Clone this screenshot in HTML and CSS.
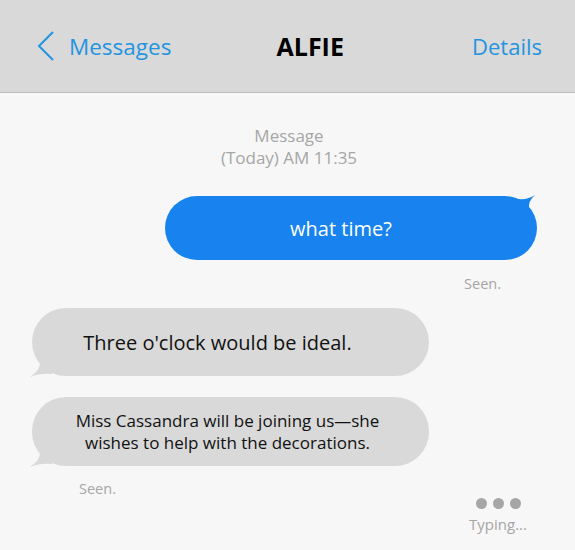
FILE: index.html
```html
<!DOCTYPE html>
<html lang="en">
  <head>
    <meta charset="UTF-8" />
    <meta name="viewport" content="width=device-width, initial-scale=1.0" />
    <title>Alfie</title>
    <link rel="stylesheet" href="styles.css">
  </head>
  <body>
    <div class="top-bar">
      <a class="back-link">
        <svg class="chevron" width="18" height="30" viewBox="0 0 18 30">
          <path d="M16 1 L2 15 L16 29" fill="none" stroke="#2394e0" stroke-width="2" />
        </svg>
        Messages
      </a>
      <h1 class="contact-name">ALFIE</h1>
      <a class="details-link">Details</a>
    </div>

    <div class="chat">
      <p class="stamp">Message<br />(Today) AM 11:35</p>

      <div class="bubble bubble-out">
        what time?
        <svg class="tail tail-out" width="20" height="14" viewBox="0 0 20 14">
          <path d="M0 4 Q10 5 17 0 Q10 6 11 14 L0 14 Z" fill="#1883ef" />
        </svg>
      </div>
      <p class="seen seen-out">Seen.</p>

      <div class="bubble bubble-in">
        Three o'clock would be ideal.
        <svg class="tail tail-in" width="22" height="16" viewBox="0 0 22 16">
          <path d="M10 0 Q11 9 0 16 Q10 12 22 13 L22 0 Z" fill="#d9d9d9" />
        </svg>
      </div>

      <div class="bubble bubble-in small">
        Miss Cassandra will be joining us—she<br />wishes to help with the decorations.
        <svg class="tail tail-in" width="22" height="16" viewBox="0 0 22 16">
          <path d="M10 0 Q11 9 0 16 Q10 12 22 13 L22 0 Z" fill="#d9d9d9" />
        </svg>
      </div>
      <p class="seen seen-in">Seen.</p>

      <div class="typing">
        <div class="dots"><span></span><span></span><span></span></div>
        <p>Typing...</p>
      </div>
    </div>
  </body>
</html>
```

FILE: styles.css
```css
body {
  margin: 0;
  font-family: "Open Sans", sans-serif;
  background: #f7f7f7;
  min-height: 100vh;
}

.top-bar {
  display: flex;
  align-items: center;
  justify-content: space-between;
  height: 92px;
  padding: 0 33px 0 37px;
  background: #d9d9d9;
  border-bottom: 1px solid #bdbdbd;
}

.back-link,
.details-link {
  display: flex;
  align-items: center;
  gap: 14px;
  color: #2394e0;
  font-size: 22.5px;
}

.details-link {
  font-size: 22px;
}

.chevron {
  display: block;
}

.contact-name {
  margin: 0 23px 0 0;
  font-size: 25px;
  font-weight: 700;
  color: #000;
}

.chat {
  display: flex;
  flex-direction: column;
  padding: 32px 38px 0 32px;
}

.stamp {
  margin: 0 0 27px;
  padding-left: 9px;
  text-align: center;
  font-size: 17px;
  line-height: 22px;
  color: #a6a6a6;
}

.bubble {
  position: relative;
  display: flex;
  align-items: center;
  justify-content: center;
  text-align: center;
  width: 397px;
  height: 68px;
  border-radius: 34px;
  box-sizing: border-box;
  font-size: 20px;
}

.bubble-out {
  align-self: flex-end;
  width: 372px;
  height: 64px;
  padding-right: 20px;
  border-radius: 32px;
  background: #1883ef;
  color: #fff;
}

.bubble-in {
  padding-right: 26px;
  background: #d9d9d9;
  color: #111;
  margin-bottom: 21px;
}

.bubble-in.small {
  height: 69px;
  padding-right: 6px;
  margin-bottom: 0;
  font-size: 17px;
  line-height: 22px;
}

.tail {
  position: absolute;
}

.tail-out {
  top: -1px;
  right: -1px;
}

.tail-in {
  bottom: -1px;
  left: -2px;
}

.seen {
  margin: 0;
  font-size: 14.5px;
  line-height: 20px;
  color: #a6a6a6;
}

.seen-out {
  align-self: flex-end;
  margin: 14px 36px 14px 0;
}

.seen-in {
  margin: 13px 0 0 47px;
}

.typing {
  align-self: flex-end;
  display: flex;
  flex-direction: column;
  align-items: center;
  margin: -1px 10px 0 0;
}

.dots {
  display: flex;
  gap: 6px;
}

.dots span {
  width: 11px;
  height: 11px;
  border-radius: 50%;
  background: #a6a6a6;
}

.typing p {
  margin: 5px 0 0;
  font-size: 15px;
  line-height: 20px;
  color: #a6a6a6;
}
```
